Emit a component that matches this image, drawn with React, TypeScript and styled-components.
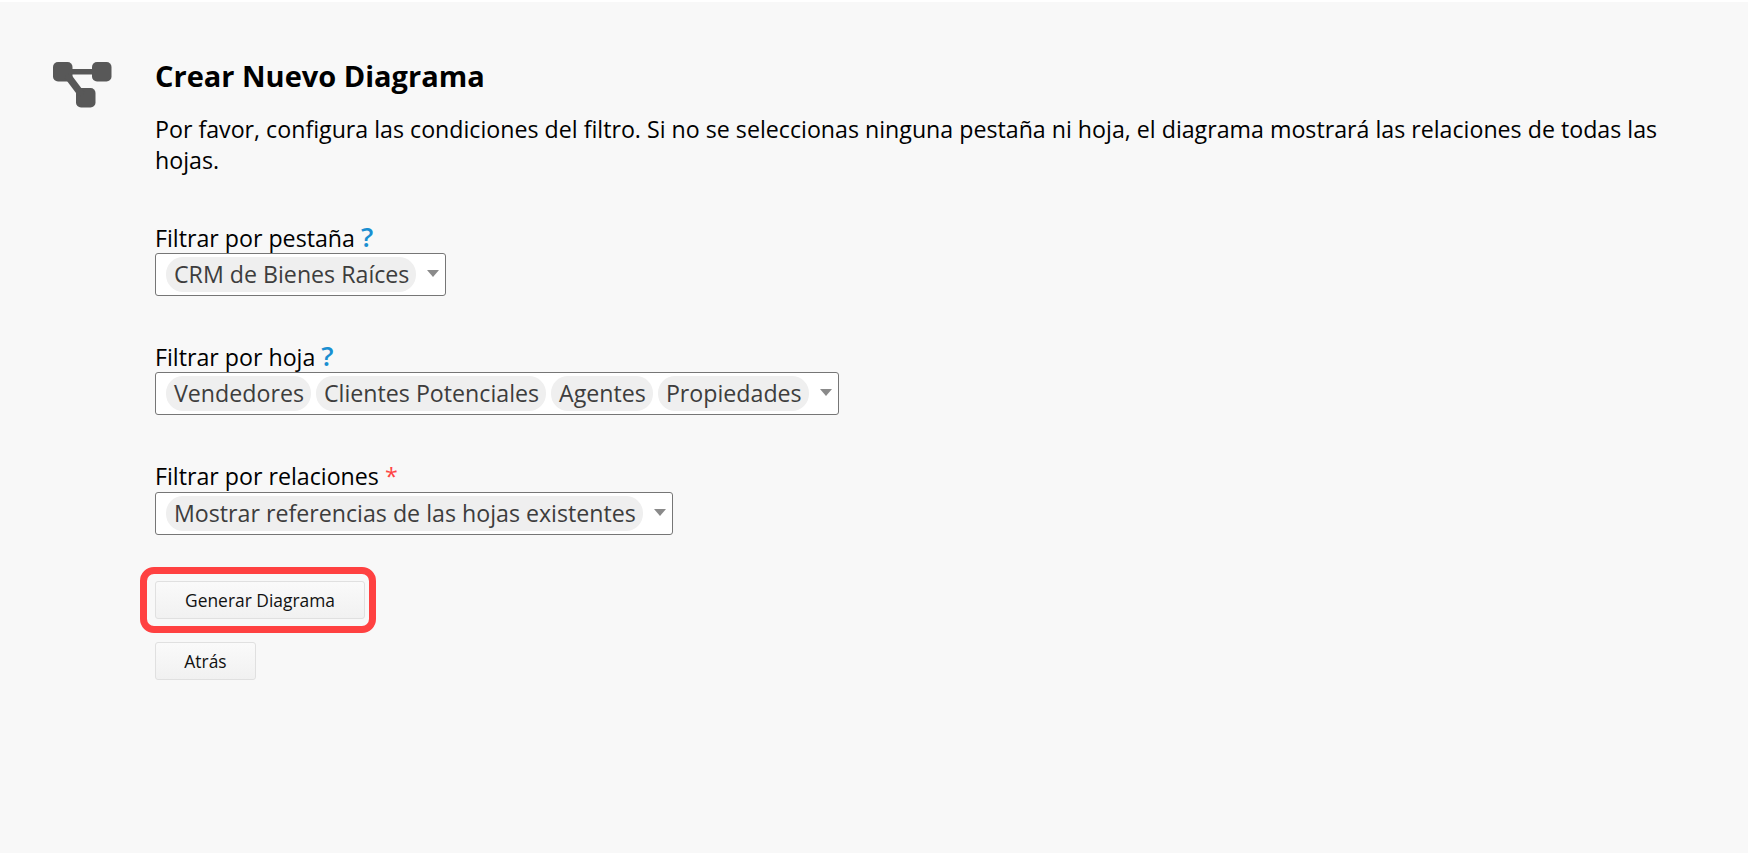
import React from "react";
import styled, { createGlobalStyle } from "styled-components";

const Global = createGlobalStyle`
  html, body { margin: 0; padding: 0; background: #fff; }
  body { font-family: "Open Sans", "Liberation Sans", sans-serif; color: #000; }
`;

const Page = styled.div`
  box-sizing: border-box;
  width: 1748px;
  height: 851px;
  margin-top: 2px;
  background: #f8f8f8;
  padding: 57px 60px 0 53px;
  display: flex;
  overflow: hidden;
`;
const IconCol = styled.div`
  width: 102px;
  flex: none;
  padding-top: 3px;
`;
const Main = styled.main`
  flex: 1;
  min-width: 0;
`;
const Title = styled.h1`
  margin: 0 0 21px;
  font-size: 29px;
  line-height: 34px;
  font-weight: 700;
`;
const Intro = styled.p`
  margin: 0 0 47px;
  font-size: 23.2px;
  line-height: 31px;
`;
const Field = styled.section<{ $after: number }>`
  margin-bottom: ${(p) => p.$after}px;
`;
const Label = styled.label`
  display: block;
  font-size: 23.2px;
  line-height: 28px;
  height: 30px;
  white-space: nowrap;
`;
const Hint = styled.span`
  color: #1a8fd1;
  font-weight: 600;
  font-size: 27px;
  line-height: 28px;
  margin-left: 6px;
`;
const Required = styled.span`
  color: #f44;
  margin-left: 6px;
`;
const Select = styled.div`
  box-sizing: border-box;
  display: inline-flex;
  align-items: center;
  gap: 5px;
  height: 43px;
  padding: 0 6px 0 10px;
  background: #fff;
  border: 1px solid #767676;
  border-radius: 3px;
`;
const Tag = styled.span`
  font-size: 23.2px;
  line-height: 35px;
  height: 35px;
  padding: 0 7px 0 8px;
  border-radius: 17px;
  background: #efefef;
  color: #3d3d3d;
  white-space: nowrap;
`;
const Caret = styled.span`
  width: 0;
  height: 0;
  margin: -3px 0 0 6px;
  border-left: 6px solid transparent;
  border-right: 6px solid transparent;
  border-top: 7px solid #8a8a8a;
`;
const Actions = styled.div`
  display: flex;
  flex-direction: column;
  align-items: flex-start;
  gap: 23px;
`;
const Highlight = styled.div`
  position: relative;
  &::after {
    content: "";
    position: absolute;
    inset: -14px -11px -14px -15px;
    border: 7px solid #ff4141;
    border-radius: 14px;
    pointer-events: none;
  }
`;
const Button = styled.button<{ $width: number }>`
  box-sizing: border-box;
  display: block;
  width: ${(p) => p.$width}px;
  height: 38px;
  padding: 0;
  font-family: inherit;
  font-size: 17.4px;
  color: #111;
  border: 1px solid #e0e0e0;
  border-radius: 3px;
  background: linear-gradient(#fafafa, #f1f1f1);
`;

const DiagramIcon = () => (
  <svg width="60" height="46" viewBox="0 0 60 46" fill="#585858" aria-hidden="true">
    <rect x="0" y="0" width="19.5" height="19.5" rx="5" />
    <rect x="39" y="0" width="19.5" height="19.5" rx="5" />
    <rect x="23" y="26" width="19.5" height="19.5" rx="5" />
    <path d="M15 7h30v5.5H15z" />
    <path d="M11 15l6-4 15 20-6 4z" />
  </svg>
);

export default function App() {
  return (
    <>
      <Global />
      <Page>
        <IconCol>
          <DiagramIcon />
        </IconCol>
        <Main>
          <Title>Crear Nuevo Diagrama</Title>
          <Intro>
            Por favor, configura las condiciones del filtro. Si no se seleccionas ninguna pestaña ni hoja, el
            diagrama mostrará las relaciones de todas las hojas.
          </Intro>
          <Field $after={46}>
            <Label>
              Filtrar por pestaña<Hint>?</Hint>
            </Label>
            <Select>
              <Tag>CRM de Bienes Raíces</Tag>
              <Caret />
            </Select>
          </Field>
          <Field $after={47}>
            <Label>
              Filtrar por hoja<Hint>?</Hint>
            </Label>
            <Select>
              <Tag>Vendedores</Tag>
              <Tag>Clientes Potenciales</Tag>
              <Tag>Agentes</Tag>
              <Tag>Propiedades</Tag>
              <Caret />
            </Select>
          </Field>
          <Field $after={46}>
            <Label>
              Filtrar por relaciones<Required>*</Required>
            </Label>
            <Select>
              <Tag>Mostrar referencias de las hojas existentes</Tag>
              <Caret />
            </Select>
          </Field>
          <Actions>
            <Highlight>
              <Button $width={210}>Generar Diagrama</Button>
            </Highlight>
            <Button $width={101}>Atrás</Button>
          </Actions>
        </Main>
      </Page>
    </>
  );
}
